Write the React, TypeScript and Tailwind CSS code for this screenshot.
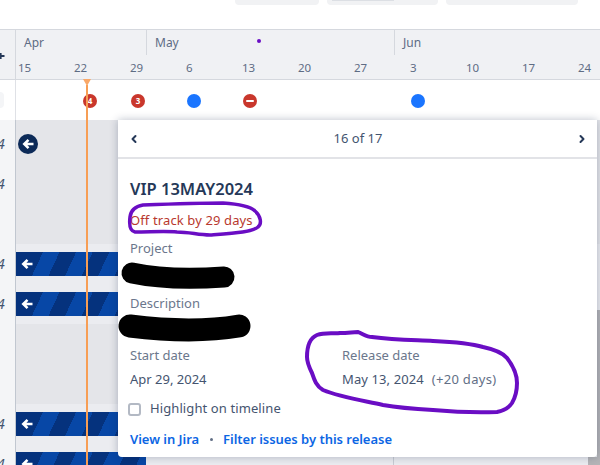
import { ChevronLeft, ChevronRight } from "lucide-react";

const dates = ["15", "22", "29", "6", "13", "20", "27", "3", "10", "17", "24"];
const stripes =
  "bg-[linear-gradient(115deg,#05327d_0,#05327d_24.5px,#0747a6_24.5px,#0747a6_39.5px,#05327d_39.5px,#05327d_54.5px,#0747a6_54.5px,#0747a6_69.5px,#05327d_69.5px,#05327d_84.5px,#0747a6_84.5px,#0747a6_99.5px,#05327d_99.5px,#05327d_114.5px,#0747a6_114.5px,#0747a6_129.5px,#05327d_129.5px)]";

function Arrow() {
  return (
    <svg width="12" height="12" viewBox="0 0 12 12" fill="none" className="shrink-0">
      <path d="M2.5 6H11.5M6.5 1.8L2.3 6L6.5 10.2" stroke="#fff" strokeWidth="2.6" />
    </svg>
  );
}

function Bar() {
  return (
    <div className={`h-6 w-[130px] ${stripes} flex items-center pl-[5px]`}>
      <Arrow />
    </div>
  );
}

function Marker({ x, cls, children }: { x: number; cls: string; children?: React.ReactNode }) {
  return (
    <div
      className={`absolute top-[14px] w-[14px] h-[14px] rounded-full flex items-center justify-center text-white text-[8px] font-bold leading-none ${cls}`}
      style={{ left: x }}
    >
      {children}
    </div>
  );
}

export default function App() {
  return (
    <div className="relative w-[600px] h-[465px] overflow-hidden bg-white font-['Noto_Sans',sans-serif] text-[#44546f]">
      {/* top toolbar remnants */}
      <div className="h-[29px] flex items-start gap-2 pl-[235px]">
        <div className="w-[84px] h-[5px] bg-[#f1f2f4] rounded-b" />
        <div className="w-[111px] h-[5px] bg-[#f1f2f4] rounded-b pl-[5px]">
          <div className="w-[62px] h-px bg-[#dcdfe4]" />
        </div>
        <div className="w-[132px] h-[5px] bg-[#f1f2f4] rounded-b" />
      </div>

      {/* timeline header */}
      <div className="h-[51px] flex bg-[#f0f1f4] border-y border-[#d5d8de]">
        <div className="w-4 shrink-0 border-r border-[#d5d8de] flex items-center overflow-hidden pt-[2px]">
          <svg width="5" height="10" viewBox="0 0 5 10" className="shrink-0">
            <path d="M0 4h4.5v2H0zM0 2h1.6v6H0z" fill="#253858" />
          </svg>
        </div>
        <div className="flex-1 min-w-0">
          <div className="h-[25px] flex text-[12px] leading-[25px] text-[#5e6c84]">
            <div className="w-[131px] pl-2 border-r border-[#d5d8de]">Apr</div>
            <div className="w-[248px] pl-2 border-r border-[#d5d8de]">May</div>
            <div className="pl-2">Jun</div>
          </div>
          <div className="flex pl-[2px] text-[11.5px] leading-[26px] text-[#5e6c84]">
            {dates.map((d) => (
              <div key={d} className="w-14 shrink-0">
                {d}
              </div>
            ))}
          </div>
        </div>
      </div>

      {/* marker row */}
      <div className="relative h-[40px] flex">
        <div className="w-4 shrink-0 border-r border-[#dfe1e6] flex items-center">
          <div className="w-1 h-4 bg-[#f4f5f7] rounded-r" />
        </div>
        <Marker x={83} cls="bg-[#c9372c]">4</Marker>
        <Marker x={131} cls="bg-[#c9372c]">3</Marker>
        <Marker x={187} cls="bg-[#1a75ff]" />
        <Marker x={243} cls="bg-[#c9372c]">
          <span className="block w-2 h-[2.5px] bg-white rounded-sm" />
        </Marker>
        <Marker x={411} cls="bg-[#1a75ff]" />
      </div>

      {/* body rows */}
      <div className="flex h-[345px] overflow-hidden shadow-[inset_0_2px_2px_-1px_rgba(9,30,66,0.2)]">
        <div className="w-4 shrink-0 bg-[#f4f5f7] border-r border-[#c1c7d0] pt-1 text-[14px] italic text-[#44546f]">
          {["4", "4", "", "4", "4", "", "", "4", "4"].map((t, i) => (
            <div key={i} className="h-10 leading-10 text-right pr-[9px] w-[15px] -ml-[3px]">
              {t}
            </div>
          ))}
        </div>
        <div className="flex-1 min-w-0 bg-[#ebecf0]">
          <div className="h-[124px] bg-[#e4e5e9] pt-[14px] pl-[2px]">
            <div className="w-5 h-5 rounded-full bg-[#0c2a58] flex items-center justify-center">
              <Arrow />
            </div>
          </div>
          <div className="h-2" />
          <Bar />
          <div className="h-4" />
          <Bar />
          <div className="h-2" />
          <div className="h-20 bg-[#e4e5e9]" />
          <div className="h-2" />
          <Bar />
          <div className="h-4" />
          <Bar />
        </div>
      </div>

      {/* today line */}
      <div className="absolute left-[86px] top-[85px] bottom-0 w-[2px] bg-[#f79e55]" />
      <div className="absolute left-[83px] top-[79px] w-0 h-0 border-x-[4px] border-x-transparent border-t-[7px] border-t-[#f9a868]" />

      {/* bottom separator and scrollbar */}
      <div className="absolute left-[393px] top-[450px] bottom-0 w-px bg-[#c8ccd3]" />
      <div className="absolute right-0 top-[310px] bottom-0 w-[3px] bg-[#b4b4b7]" />
      <div className="absolute left-[588px] top-[457px] bottom-0 right-0 bg-[#b4b4b7]" />

      {/* popover */}
      <div className="absolute left-[118px] top-[120px] w-[479px] h-[337px] bg-white rounded-b shadow-[0_0_8px_rgba(9,30,66,0.28)]">
        <div className="h-[39px] flex items-center justify-between pl-[10px] pr-[9px] pt-px border-b-2 border-[#e2e3e7]">
          <ChevronLeft size={12} strokeWidth={4} className="text-[#253858]" />
          <span className="text-[13px] text-[#44546f]">16 of 17</span>
          <ChevronRight size={12} strokeWidth={4} className="text-[#253858]" />
        </div>
        <div className="pl-3">
          <div className="mt-[18px] h-[24px] text-[16.5px] leading-[24px] font-semibold text-[#253858] whitespace-nowrap">
            VIP 13MAY2024
          </div>
          <div className="mt-[10px] h-[18px] text-[13px] tracking-[0.12px] leading-[18px] text-[#b8382e]">
            Off track by 29 days
          </div>
          <div className="mt-[10px] h-[18px] text-[13px] leading-[18px] text-[#6b778c]">Project</div>
          <div className="h-[37px]" />
          <div className="h-[18px] text-[13px] leading-[18px] text-[#6b778c]">Description</div>
          <div className="h-[34px]" />
          <div className="grid grid-cols-[212px_1fr] text-[13px] leading-[18px]">
            <div className="text-[#6b778c]">Start date</div>
            <div className="text-[#6b778c]">Release date</div>
            <div className="mt-[6px] text-[#44546f]">Apr 29, 2024</div>
            <div className="mt-[6px] flex text-[#44546f] tracking-[0.1px] whitespace-nowrap">
              <span>May 13, 2024</span>
              <span className="ml-[8px] text-[#626f86] tracking-[0.3px]">(+20 days)</span>
            </div>
          </div>
          <div className="mt-[12px] flex items-center gap-[9px] -ml-[2px] h-[18px]">
            <div className="w-[13px] h-[13px] rounded-[3px] border-2 border-[#b3b9c4]" />
            <span className="text-[13px] tracking-[0.1px] text-[#44546f]">Highlight on timeline</span>
          </div>
          <div className="mt-[12px] flex items-center text-[13px] tracking-[-0.03px] leading-[18px] font-semibold text-[#0c66e4]">
            <span>View in Jira</span>
            <span className="mx-[10.5px] w-[3px] h-[3px] rounded-full bg-[#626f86]" />
            <span>Filter issues by this release</span>
          </div>
        </div>
      </div>

      {/* hand-drawn annotations */}
      <svg className="absolute inset-0 pointer-events-none" width="600" height="465" viewBox="0 0 600 465" fill="none">
        <circle cx="259" cy="41" r="2" fill="#6a0dc4" />
        <path
          d="M130 217 C131 209 137 206 143 205 C170 204 200 203 223 203 C238 204 250 206 255 211 C261 216 262 224 258 227 C252 232 236 233 210 235 C198 235 190 232 177 232 C165 231 150 232 135 232 C130 231 129 225 130 217 Z"
          stroke="#6a0dc4"
          strokeWidth="3.5"
          strokeLinecap="round"
        />
        <path
          d="M358 332 C363 334 367 337 372 337 C395 340 415 340 433 341 C455 342 473 344 483 347 C497 350 503 353 507 358 C514 367 517 375 517 383 C517 392 515 398 512 403 C508 409 503 411 497 412 C470 413 455 412 433 410 C415 409 400 408 383 405 C360 400 340 397 323 390 C316 386 314 379 312 373 C309 367 307 362 307 357 C307 346 310 338 317 335 C325 332 335 334 340 333 C348 333 353 332 358 332 Z"
          stroke="#6a0dc4"
          strokeWidth="4"
          strokeLinecap="round"
        />
        <path d="M132 273 C160 279 195 279 224 277" stroke="#000" strokeWidth="21" strokeLinecap="round" />
        <path d="M130 326 C170 331 210 331 239 326" stroke="#000" strokeWidth="23" strokeLinecap="round" />
      </svg>
    </div>
  );
}
